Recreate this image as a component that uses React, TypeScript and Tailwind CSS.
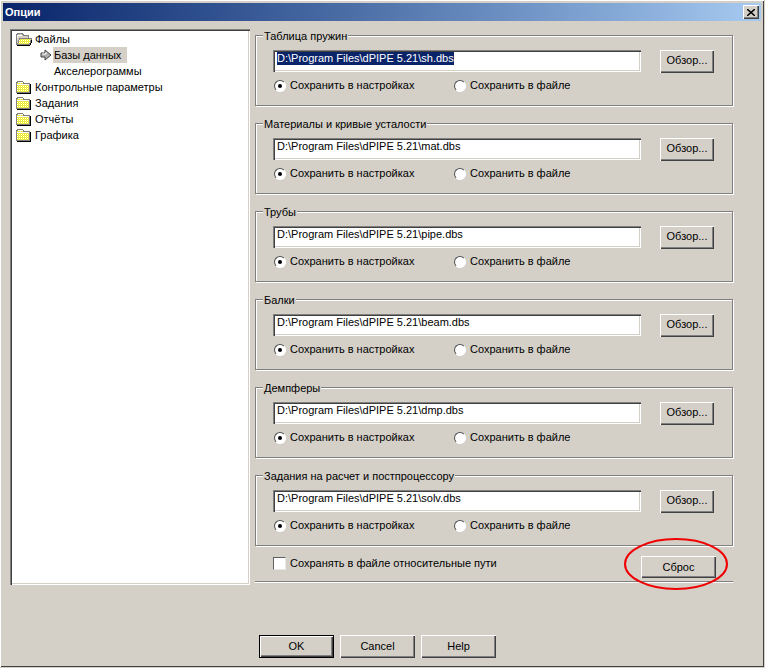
const raised = 'bg-[#d4d0c8] shadow-[inset_1px_1px_0_#ffffff,inset_-1px_-1px_0_#404040,inset_-2px_-2px_0_#808080]';
const sunken = 'bg-white shadow-[inset_1px_1px_0_#808080,inset_2px_2px_0_#404040,inset_-1px_-1px_0_#ffffff,inset_-2px_-2px_0_#d4d0c8]';

const groups = [
  { title: 'Таблица пружин', path: 'D:\\Program Files\\dPIPE 5.21\\sh.dbs', selected: true },
  { title: 'Материалы и кривые усталости', path: 'D:\\Program Files\\dPIPE 5.21\\mat.dbs' },
  { title: 'Трубы', path: 'D:\\Program Files\\dPIPE 5.21\\pipe.dbs' },
  { title: 'Балки', path: 'D:\\Program Files\\dPIPE 5.21\\beam.dbs' },
  { title: 'Демпферы', path: 'D:\\Program Files\\dPIPE 5.21\\dmp.dbs' },
  { title: 'Задания на расчет и постпроцессору', path: 'D:\\Program Files\\dPIPE 5.21\\solv.dbs' },
];

function Folder({ open }: { open?: boolean }) {
  const id = open ? 'dither-open' : 'dither-closed';
  return (
    <svg width="17" height="14" viewBox="0 0 17 14" className="shrink-0" shapeRendering="crispEdges">
      <defs>
        <pattern id={id} width="2" height="2" patternUnits="userSpaceOnUse">
          <rect width="2" height="2" fill="#ffff00" />
          <rect width="1" height="1" fill="#ffffff" />
          <rect x="1" y="1" width="1" height="1" fill="#d8d890" />
        </pattern>
      </defs>
      {open ? (
        <>
          <path d="M1.5 3.5 V2.5 H2.5 V1.5 H7.5 V2.5 H8.5 V3.5 H13.5 V12.5 H1.5 Z" fill="#d4d0c8" stroke="#808080" />
          <path d="M2.5 5.5 V3.5 H7" stroke="#ffffff" fill="none" />
          <path d="M4.5 6.5 H16.5 L14.5 12.5 H2.5 Z" fill={`url(#${id})`} stroke="#808080" />
          <path d="M2 13.5 H15 M15.5 13 L17 8" stroke="#000000" fill="none" />
        </>
      ) : (
        <>
          <path d="M1.5 12.5 V2.5 H2.5 V1.5 H7.5 V2.5 H8.5 V3.5 H14.5 V12.5 Z" fill={`url(#${id})`} stroke="#808080" />
          <path d="M2.5 4.5 H13.5 M2.5 2.5 H7.5" stroke="#ffffff" fill="none" />
          <path d="M15.5 4 V13.5 H2" stroke="#000000" fill="none" />
        </>
      )}
    </svg>
  );
}

function TreeRow({ label, open }: { label: string; open?: boolean }) {
  return (
    <div className="flex h-4 items-center gap-[3px] pl-[1px]">
      <Folder open={open} />
      <span>{label}</span>
    </div>
  );
}

function Radio({ checked }: { checked?: boolean }) {
  return (
    <span className="flex h-3 w-3 shrink-0 items-center justify-center rounded-full border border-t-[#505050] border-l-[#505050] border-r-white border-b-white bg-white">
      {checked && <span className="h-1 w-1 rounded-full bg-black" />}
    </span>
  );
}

function Group({ title, path, selected }: { title: string; path: string; selected?: boolean }) {
  return (
    <div className="relative h-[71px] shrink-0 border border-[#808080] pt-[14px] pl-[17px] shadow-[inset_1px_1px_0_#ffffff,1px_1px_0_#ffffff]">
      <span className="absolute -top-[6px] left-[7px] bg-[#d4d0c8] px-[1px] leading-[13px]">{title}</span>
      <div className="flex items-start">
        <div className={`flex h-[22px] w-[368px] items-start pt-[2px] pl-[4px] ${sunken}`}>
          <span className={selected ? 'bg-[#0a246a] text-white' : ''}>{path}</span>
        </div>
        <button className={`ml-[19px] h-[23px] w-[54px] pb-[2px] ${raised}`}>Обзор...</button>
      </div>
      <div className="mt-[6px] flex h-[13px] items-center pl-[1px]">
        <Radio checked />
        <span className="ml-[4px] w-[164px]">Сохранить в настройках</span>
        <Radio />
        <span className="ml-[4px]">Сохранить в файле</span>
      </div>
    </div>
  );
}

export default function App() {
  return (
    <div className="relative h-[668px] w-[765px] overflow-hidden bg-[#d4d0c8] font-['Liberation_Sans',sans-serif] text-[11px] leading-[13px] text-black">
      <div className="h-[668px] w-[765px] pb-[1px]">
        <div className="flex h-[667px] w-[764px] flex-col p-[3px] shadow-[inset_1px_1px_0_#ffffff,inset_-1px_-1px_0_#404040]">
          <div className="flex h-[18px] shrink-0 items-center justify-between bg-gradient-to-r from-[#0a246a] to-[#a6caf0] pr-[2px] pl-[2px]">
            <span className="text-[11px] font-bold text-white">Опции</span>
            <button className={`flex h-[14px] w-[16px] items-center justify-center ${raised}`}>
              <svg width="8" height="7" viewBox="0 0 8 7">
                <path d="M0 0 L8 7 M8 0 L0 7" stroke="#000000" strokeWidth="1.5" />
              </svg>
            </button>
          </div>

          <div className="flex flex-1 pt-[8px] pl-[7px]">
            <div className={`h-[556px] w-[240px] shrink-0 pt-[2px] pl-[4px] ${sunken}`}>
              <TreeRow label="Файлы" open />
              <div className="flex h-4 items-center pl-[26px]">
                <svg width="12" height="12" viewBox="0 0 12 12" className="shrink-0">
                  <path d="M1 4 H5 V1 L11 6 L5 11 V8 H1 Z" fill="#b0b0b0" stroke="#404040" />
                  <path d="M2 5 H6 V3" stroke="#ffffff" fill="none" />
                </svg>
                <span className="ml-[1px] flex h-4 w-[74px] items-center bg-[#d4d0c8] pl-[1px]">Базы данных</span>
              </div>
              <div className="flex h-4 items-center pl-[40px]">Акселерограммы</div>
              <TreeRow label="Контрольные параметры" />
              <TreeRow label="Задания" />
              <TreeRow label="Отчёты" />
              <TreeRow label="Графика" />
            </div>

            <div className="ml-[5px] flex w-[478px] shrink-0 flex-col gap-[10px] pt-[6px]">
              <div className="flex flex-col gap-[17px]">
                {groups.map((g) => (
                  <Group key={g.title} {...g} />
                ))}
              </div>
              <div className="flex h-[27px] border-b border-white pl-[18px] shadow-[inset_0_-1px_0_#808080]">
                <span className="mt-[1px] h-[13px] w-[13px] shrink-0 border border-t-[#606060] border-l-[#606060] border-r-[#e8e8e8] border-b-[#e8e8e8] bg-white" />
                <span className="ml-[4px] w-[351px] pt-[1px]">Сохранять в файле относительные пути</span>
                <button className={`h-[22px] w-[75px] ${raised}`}>Сброс</button>
              </div>
              <div className="flex gap-[6px] pt-[42px] pl-[4px]">
                <button className={`h-[23px] w-[75px] border border-black ${raised}`}>OK</button>
                <button className={`h-[23px] w-[75px] ${raised}`}>Cancel</button>
                <button className={`h-[23px] w-[75px] ${raised}`}>Help</button>
              </div>
            </div>
          </div>
        </div>
      </div>

      {/* red annotation drawn over the screenshot */}
      <svg width="765" height="668" className="pointer-events-none absolute top-0 left-0">
        <ellipse cx="676" cy="564" rx="51" ry="25" fill="none" stroke="#f00000" strokeWidth="2" />
      </svg>
    </div>
  );
}
